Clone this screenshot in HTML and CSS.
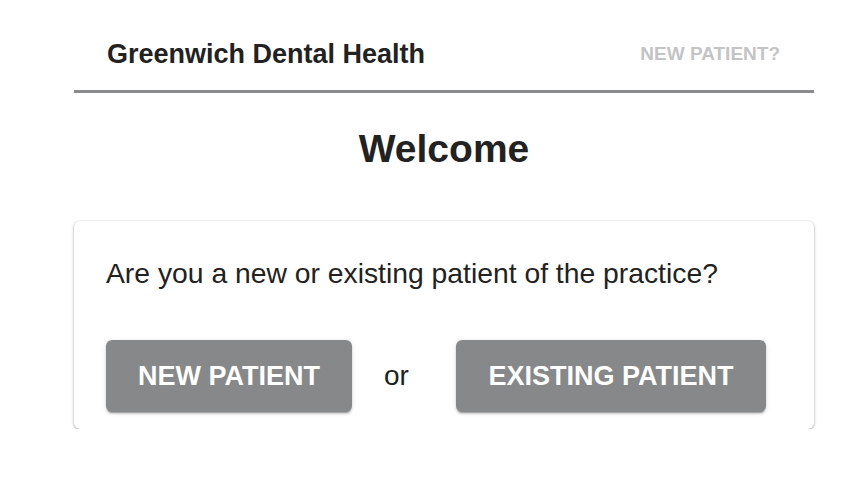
FILE: index.html
```html
<!DOCTYPE html>
<html lang="en">

<head>
    <meta charset="UTF-8">
    <meta name="viewport" content="width=device-width, initial-scale=1.0">
    <title>Greenwich Dental Health</title>
    <link rel="stylesheet" href="styles.css">
</head>

<body>
    <div class="pagina">
        <header class="topo">
            <p class="marca">Greenwich Dental Health</p>
            <a class="link_novo" href="#">NEW PATIENT?</a>
        </header>

        <main>
            <h1 class="titulo">Welcome</h1>

            <section class="cartao">
                <p class="pergunta">Are you a new or existing patient of the practice?</p>

                <div class="botoes">
                    <button class="botao botao_novo" type="button">NEW PATIENT</button>
                    <span class="ou">or</span>
                    <button class="botao botao_existente" type="button">EXISTING PATIENT</button>
                </div>
            </section>
        </main>
    </div>
</body>

</html>
```

FILE: styles.css
```css
* {
    margin: 0;
    padding: 0;
    box-sizing: border-box;
}
body{
    font-family: 'Liberation Sans', Arial, sans-serif;
    background-color: #ffffff;
    color: #212121;
}
.pagina{
    width: 740px;
    margin-left: 74px;
}
.topo{
    display: flex;
    justify-content: space-between;
    align-items: center;
    height: 93px;
    padding: 18px 34px 0 33px;
    border-bottom: 3px solid #8a8b8c;
}
.marca{
    font-size: 27px;
    font-weight: bold;
    color: #222222;
}
.link_novo{
    font-size: 19px;
    font-weight: bold;
    color: #c4c4c4;
    text-decoration: none;
}
.titulo{
    font-size: 39px;
    font-weight: bold;
    text-align: center;
    margin-top: 34px;
    line-height: 44px;
    color: #222222;
}
.cartao{
    margin-top: 50px;
    background-color: #ffffff;
    border-radius: 6px;
    box-shadow: 0 1px 3px 0 rgba(0,0,0,0.35), 0 0 1px 0 rgba(0,0,0,0.12);
    padding: 36px 32px 16px 32px;
    height: 208px;
}
.pergunta{
    font-size: 28.3px;
    line-height: 32px;
    color: #222222;
}
.botoes{
    display: flex;
    align-items: center;
    margin-top: 51px;
}
.botao{
    height: 72px;
    border: none;
    border-radius: 6px;
    background-color: #86888a;
    color: #ffffff;
    font-family: 'Liberation Sans', Arial, sans-serif;
    font-size: 27px;
    font-weight: bold;
    box-shadow: 0 3px 1px -2px rgba(0,0,0,0.2), 0 2px 2px 0 rgba(0,0,0,0.14), 0 1px 5px 0 rgba(0,0,0,0.12);
}
.botao_novo{
    width: 246px;
}
.botao_existente{
    width: 310px;
}
.ou{
    font-size: 28px;
    margin: 0 47px 0 32px;
}
```
